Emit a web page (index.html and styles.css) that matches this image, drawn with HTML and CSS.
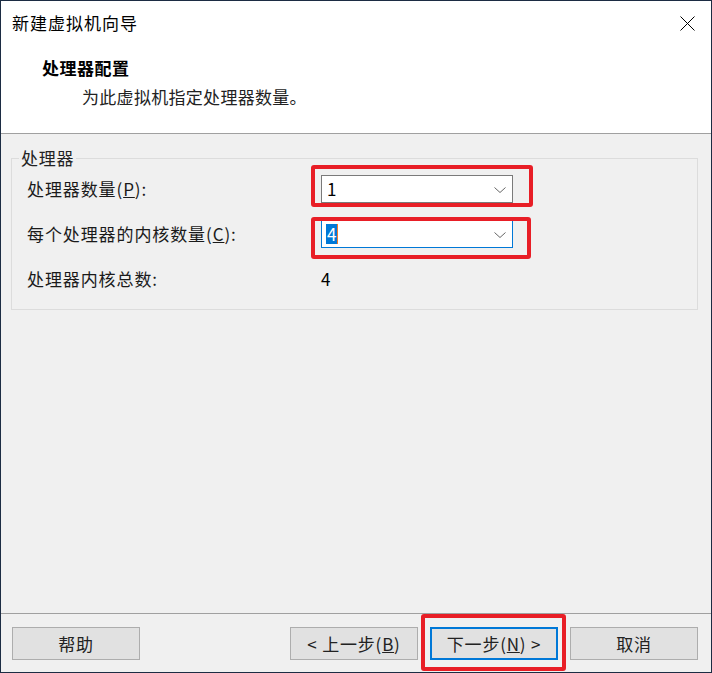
FILE: index.html
```html
<!DOCTYPE html>
<html lang="zh-CN">
<head>
  <meta charset="UTF-8">
  <title>新建虚拟机向导</title>
  <link rel="stylesheet" href="styles.css">
</head>
<body>

<div class="window">

  <!-- Title bar -->
  <div class="titlebar">
    <span class="title">新建虚拟机向导</span>
    <svg class="close" width="15" height="15" viewBox="0 0 15 15">
      <path d="M0.5 0.5 L14.5 14.5 M14.5 0.5 L0.5 14.5" stroke="#000" stroke-width="1" fill="none"/>
    </svg>
  </div>

  <!-- Header -->
  <div class="header">
    <h1>处理器配置</h1>
    <p>为此虚拟机指定处理器数量。</p>
  </div>

  <!-- Main content -->
  <div class="content">
    <fieldset class="group">
      <legend>处理器</legend>
      <div class="rows">
        <label>处理器数量(<u>P</u>):</label>
        <div class="combo-wrap">
          <div class="combo">
            <span class="value">1</span>
            <svg class="chevron" width="12" height="6" viewBox="0 0 12 6">
              <path d="M0.5 0.5 L6 5.5 L11.5 0.5" stroke="#666" stroke-width="1" fill="none"/>
            </svg>
          </div>
          <span class="mark mark-one"></span>
        </div>

        <label>每个处理器的内核数量(<u>C</u>):</label>
        <div class="combo-wrap">
          <div class="combo focused">
            <span class="value selected">4</span>
            <svg class="chevron" width="12" height="6" viewBox="0 0 12 6">
              <path d="M0.5 0.5 L6 5.5 L11.5 0.5" stroke="#666" stroke-width="1" fill="none"/>
            </svg>
          </div>
          <span class="mark mark-two"></span>
        </div>

        <label>处理器内核总数:</label>
        <span class="total">4</span>
      </div>
    </fieldset>
  </div>

  <!-- Footer buttons -->
  <div class="footer">
    <button>帮助</button>
    <div class="spacer"></div>
    <button>&lt; 上一步(<u>B</u>)</button>
    <div class="btn-wrap">
      <button class="default">下一步(<u>N</u>) &gt;</button>
      <span class="mark mark-next"></span>
    </div>
    <button>取消</button>
  </div>

</div>

</body>
</html>
```
FILE: styles.css
```css
* {
  box-sizing: border-box;
}

body {
  margin: 0;
  font-family: "Noto Sans CJK SC", "Noto Sans", sans-serif;
  font-size: 17px;
  color: #1a1a1a;
}

.window {
  width: 712px;
  height: 673px;
  border: 1px solid #1c2c43;
  display: flex;
  flex-direction: column;
  background: #f0f0f0;
}

/* title bar */
.titlebar {
  height: 43px;
  background: #fff;
  display: flex;
  align-items: center;
  justify-content: space-between;
  padding: 0 16px 0 11px;
}

.title {
  color: #000;
  line-height: 24px;
  letter-spacing: 1px;
}

.close {
  display: block;
  margin-top: 1px;
}

/* header */
.header {
  height: 90px;
  background: #fff;
  border-bottom: 1px solid #a0a0a0;
  padding: 12px 0 0 41px;
}

.header h1 {
  margin: 0;
  font-size: 17px;
  font-weight: bold;
  line-height: 24px;
  color: #000;
  letter-spacing: 0.5px;
}

.header p {
  margin: 5px 0 0 40px;
  line-height: 24px;
  color: #222;
  letter-spacing: 0.3px;
}

/* content */
.content {
  flex: 1;
  padding: 14px 13px 0 10px;
}

.group {
  margin: 0;
  padding: 0 0 16px 7px;
  border: 1px solid #dcdcdc;
}

.group legend {
  padding: 0 2px;
  line-height: 20px;
  color: #222;
  letter-spacing: 0.8px;
}

.rows {
  display: grid;
  grid-template-columns: 294px 192px;
  row-gap: 17px;
  align-items: center;
  padding: 7px 0 0 8px;
}

.rows label {
  line-height: 28px;
  letter-spacing: 0.9px;
}

.combo-wrap {
  position: relative;
}

.combo {
  height: 28px;
  background: #fff;
  border: 1px solid #7a7a7a;
  display: flex;
  align-items: center;
  justify-content: space-between;
  padding: 0 6px 0 5px;
  position: relative;
  z-index: 1;
}

.combo.focused {
  border-color: #0078d7;
}

.value {
  line-height: 20px;
  color: #000;
}

.value.selected {
  background: #0078d7;
  color: #fff;
  padding: 0 1px;
  margin-left: -1px;
  border-right: 1px solid #f07a2a;
}

.chevron {
  display: block;
  margin-top: 1px;
}

.total {
  line-height: 28px;
  color: #000;
}

/* red annotation frames */
.mark {
  position: absolute;
  border: 4px solid #e81e26;
  border-radius: 3px;
  z-index: 2;
  pointer-events: none;
}

.mark-one {
  inset: -10px -20px -4px -10px;
}

.mark-two {
  inset: -3px -18px -11px -10px;
}

.mark-next {
  inset: -13px -8px -11px -9px;
}

/* footer */
.footer {
  height: 59px;
  border-top: 1px solid #a0a0a0;
  display: flex;
  align-items: flex-start;
  gap: 12px;
  padding: 13px 13px 0 11px;
}

.spacer {
  flex: 1;
}

.btn-wrap {
  position: relative;
}

button {
  width: 128px;
  height: 33px;
  background: #e1e1e1;
  border: 1px solid #adadad;
  font-family: inherit;
  font-size: 17px;
  color: #222;
  padding: 0;
  line-height: 24px;
  letter-spacing: 0.8px;
}

button.default {
  border-color: #0078d7;
  box-shadow: inset 0 0 0 1px #0078d7;
}
```
